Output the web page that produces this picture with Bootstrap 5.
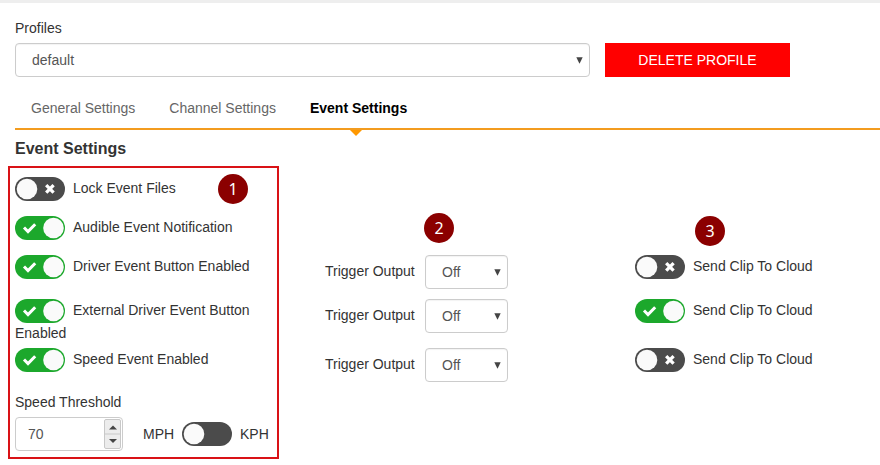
<!DOCTYPE html>
<html lang="en">
<head>
<meta charset="utf-8">
<title>Event Settings</title>
<link href="https://cdn.jsdelivr.net/npm/bootstrap@5.3.0/dist/css/bootstrap.min.css" rel="stylesheet">
<style>
body{font:14px/20px "Liberation Sans",Arial,sans-serif;color:#333;background:#fff;height:465px}
.page{padding-left:15px;border-top:3px solid #eee}
.label-profiles{padding-top:15px;height:40px}
.form-select.pick{height:34px;border:1px solid #ccc;border-radius:4px;color:#555;font-size:14px;line-height:20px;padding:6px 12px 6px 16px;background:#fff;box-shadow:inset 0 1px 1px rgba(0,0,0,.05)}
.arrow-down{width:7px;height:7px;fill:#444;flex:none;margin-right:-6px}
.profile-pick{width:575px}
.btn.remove{width:185px;height:34px;background:#f00;color:#fff;border:0;border-radius:0;font-size:14px;line-height:20px;padding:7px 0;margin-left:15px}
.tabs{height:53px;border-bottom:2px solid #f39c1f;padding-top:21px}
.tabs .nav-link{color:#666;padding:0 17px;line-height:20px}
.tabs .nav-item:first-child .nav-link{padding-left:16px}
.tabs .nav-link.active{color:#000;font-weight:700;position:relative}
.tabs .nav-link.active::after{content:"";position:absolute;left:57px;top:32px;border:6px solid transparent;border-top:6px solid #ff9800;border-bottom:0}
h1.section{font-size:16px;line-height:20px;font-weight:700;margin:9px 0 18px}
.settings{display:grid;grid-template-columns:310px 310px 1fr;grid-template-rows:39px 39px 44px 49px 44px}
.setting{max-width:250px;line-height:20px}
.toggle{display:inline-block;width:50px;height:24px;border-radius:12px;vertical-align:middle;margin-right:8px;background:#4b4b4b}
.toggle.on{background:#1ca82c}
.toggle svg{display:block}
.trigger{width:100px;padding-top:6px}
.off-pick{width:83px}
.threshold{height:25px}
.number{width:108px;height:34px;border:1px solid #ccc;border-radius:4px;color:#555;padding:0 1px 0 12px}
.stepper{width:17px;height:30px}
.mph{width:39px;margin-left:20px}
.callout-frame{position:absolute;left:8px;top:166px;width:271px;height:293px;border:2px solid #d91216}
.callout{position:absolute;width:30px;height:30px;border-radius:50%;background:#8b0000;color:#fff;font:16px/30px "Noto Sans",sans-serif;text-align:center}
.c1{left:218px;top:174px}
.c2{left:424px;top:213px}
.c3{left:695px;top:216px}
</style>
<script src="https://cdn.jsdelivr.net/npm/bootstrap@5.3.0/dist/js/bootstrap.bundle.min.js"></script>
</head>
<body class="overflow-hidden position-relative">
<svg class="d-none">
  <symbol id="down" viewBox="0 0 7 7"><path d="M.3 .3h6.4L3.5 6.8z"/></symbol>
  <symbol id="off" viewBox="0 0 50 24"><circle cx="12" cy="12" r="10.3" fill="#fafafa"/><path d="M31.2 8.2l7.4 7.4M38.6 8.2l-7.4 7.4" stroke="#fff" stroke-width="3.3"/></symbol>
  <symbol id="on" viewBox="0 0 50 24"><circle cx="38.5" cy="12" r="10.3" fill="#fafafa"/><path d="M9 11.5l4 4 7.2-7.3" fill="none" stroke="#fff" stroke-width="3"/></symbol>
  <symbol id="plain" viewBox="0 0 50 24"><circle cx="12" cy="12" r="10.3" fill="#fafafa"/></symbol>
</svg>
<main class="page">
  <div class="label-profiles">Profiles</div>
  <div class="d-flex">
    <div class="form-select pick profile-pick d-flex align-items-center justify-content-between">default<svg class="arrow-down"><use href="#down"/></svg></div>
    <button class="btn remove">DELETE PROFILE</button>
  </div>
  <ul class="nav tabs mb-0">
    <li class="nav-item"><a class="nav-link">General Settings</a></li>
    <li class="nav-item"><a class="nav-link">Channel Settings</a></li>
    <li class="nav-item"><a class="nav-link active">Event Settings</a></li>
  </ul>
  <h1 class="section">Event Settings</h1>
  <div class="settings">
    <div class="setting"><span class="toggle"><svg width="50" height="24"><use href="#off"/></svg></span>Lock Event Files</div><div></div><div></div>
    <div class="setting"><span class="toggle on"><svg width="50" height="24"><use href="#on"/></svg></span>Audible Event Notification</div><div></div><div></div>

    <div class="setting"><span class="toggle on"><svg width="50" height="24"><use href="#on"/></svg></span>Driver Event Button Enabled</div>
    <div class="d-flex align-items-start"><span class="trigger">Trigger Output</span><div class="form-select pick off-pick d-flex align-items-center justify-content-between">Off<svg class="arrow-down"><use href="#down"/></svg></div></div>
    <div class="setting"><span class="toggle"><svg width="50" height="24"><use href="#off"/></svg></span>Send Clip To Cloud</div>

    <div class="setting"><span class="toggle on"><svg width="50" height="24"><use href="#on"/></svg></span>External Driver Event Button Enabled</div>
    <div class="d-flex align-items-start"><span class="trigger">Trigger Output</span><div class="form-select pick off-pick d-flex align-items-center justify-content-between">Off<svg class="arrow-down"><use href="#down"/></svg></div></div>
    <div class="setting"><span class="toggle on"><svg width="50" height="24"><use href="#on"/></svg></span>Send Clip To Cloud</div>

    <div class="setting"><span class="toggle on"><svg width="50" height="24"><use href="#on"/></svg></span>Speed Event Enabled</div>
    <div class="d-flex align-items-start"><span class="trigger">Trigger Output</span><div class="form-select pick off-pick d-flex align-items-center justify-content-between">Off<svg class="arrow-down"><use href="#down"/></svg></div></div>
    <div class="setting"><span class="toggle"><svg width="50" height="24"><use href="#off"/></svg></span>Send Clip To Cloud</div>
  </div>
  <div class="threshold">Speed Threshold</div>
  <div class="d-flex align-items-center">
    <div class="number d-flex align-items-center justify-content-between">70
      <svg class="stepper" viewBox="0 0 17 30"><rect x=".5" y=".5" width="16" height="29" rx="1.5" fill="#ececec" stroke="#c8c8c8"/><path d="M1 15h15" stroke="#c8c8c8"/><path d="M5 10.5h8L9 6.5zM5 20h8l-4 4z" fill="#444"/></svg>
    </div>
    <span class="mph">MPH</span><span class="toggle"><svg width="50" height="24"><use href="#plain"/></svg></span><span>KPH</span>
  </div>
</main>
<div class="callout-frame"></div>
<div class="callout c1">1</div>
<div class="callout c2">2</div>
<div class="callout c3">3</div>
</body>
</html>
